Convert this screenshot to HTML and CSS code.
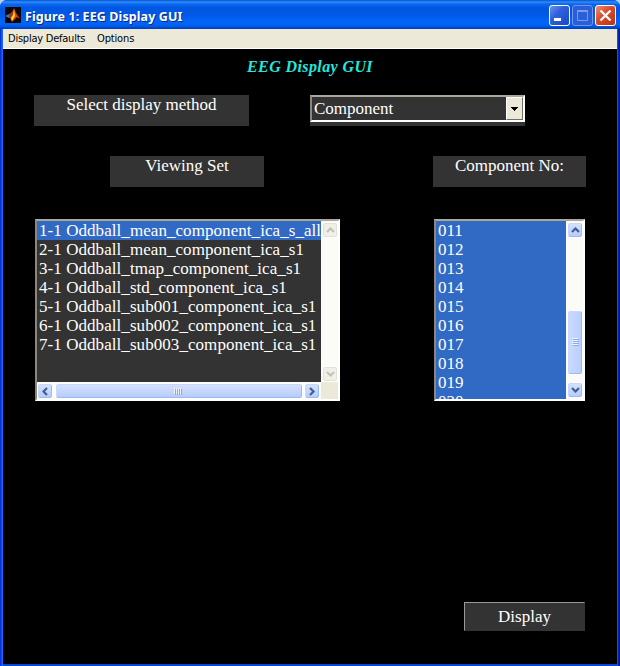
FILE: index.html
```html
<!DOCTYPE html>
<html lang="en">
<head>
<meta charset="utf-8">
<title>Figure 1: EEG Display GUI</title>
<link rel="stylesheet" href="styles.css">
</head>
<body>
<div class="window">
  <header class="titlebar">
    <svg class="logo" width="16" height="16" viewBox="0 0 16 16"><rect width="16" height="16" fill="#080808"/><path d="M0 9l4-2 2 2-2 2z" fill="#377fa3"/><path d="M4 7l3-2 2-4-2 9-3 1z" fill="#983918"/><path d="M9 1l2 5 4 6-3-2-2 2-3 3-2-4 2-2z" fill="#e63b12"/><path d="M9 2l1 7-3 5-1-3 2-3z" fill="#ffd72e"/></svg>
    <h1 class="caption">Figure 1: EEG Display GUI</h1>
    <div class="controls">
      <svg class="control" viewBox="0 0 21 21"><rect x=".5" y=".5" width="20" height="20" rx="2.5" fill="url(#blue)" stroke="#fff"/><rect x="5" y="13" width="7" height="3" fill="#fff"/>
        <defs><linearGradient id="blue" x2="1" y2="1"><stop stop-color="#7295ec"/><stop offset=".4" stop-color="#2f61dc"/><stop offset="1" stop-color="#1747c4"/></linearGradient><linearGradient id="red" x2="1" y2="1"><stop stop-color="#ee9377"/><stop offset=".45" stop-color="#db4927"/><stop offset="1" stop-color="#b93313"/></linearGradient></defs></svg>
      <svg class="control" viewBox="0 0 21 21"><rect x=".5" y=".5" width="20" height="20" rx="2.5" fill="#2860dc" stroke="#7893e4"/><path d="M5.5 5.5h10v10h-10zM5 6.5h11" fill="none" stroke="#8398df"/></svg>
      <svg class="control" viewBox="0 0 21 21"><rect x=".5" y=".5" width="20" height="20" rx="2.5" fill="url(#red)" stroke="#fff"/><path d="M5.5 5.5l10 10M15.500 5.500l-10 10" stroke="#fff" stroke-width="2.4"/></svg>
    </div>
  </header>
  <nav class="menubar"><span class="menu-defaults">Display Defaults</span><span class="menu-options">Options</span></nav>
  <main class="figure">
    <h2 class="heading">EEG Display GUI</h2>
    <div class="row method-row">
      <div class="label method-label">Select display method</div>
      <div class="combo-wrap"><div class="combo"><span class="combo-value">Component</span><span class="combo-button"><svg width="7" height="4" viewBox="0 0 7 4" shape-rendering="crispEdges"><path d="M0 0h7v1H6v1H5v1H4v1H3V3H2V2H1V1H0z"/></svg></span></div></div>
    </div>
    <div class="row label-row">
      <div class="label">Viewing Set</div>
      <div class="label component-label">Component No:</div>
    </div>
    <div class="row list-row">
      <div class="listbox sets">
        <ul class="items">
          <li class="selected">1-1 Oddball_mean_component_ica_s_all</li>
          <li>2-1 Oddball_mean_component_ica_s1</li>
          <li>3-1 Oddball_tmap_component_ica_s1</li>
          <li>4-1 Oddball_std_component_ica_s1</li>
          <li>5-1 Oddball_sub001_component_ica_s1</li>
          <li>6-1 Oddball_sub002_component_ica_s1</li>
          <li>7-1 Oddball_sub003_component_ica_s1</li>
        </ul>
        <div class="scroll vertical disabled">
          <span class="arrow"><svg width="9" height="6" viewBox="0 0 9 6"><path d="M1 5l3.500-3.500L8 5"/></svg></span>
          <span class="arrow"><svg width="9" height="6" viewBox="0 0 9 6"><path d="M1 1l3.500 3.500L8 1"/></svg></span>
        </div>
        <div class="scroll horizontal">
          <span class="arrow"><svg width="6" height="9" viewBox="0 0 6 9"><path d="M5 1L1.500 4.500 5 8"/></svg></span>
          <span class="thumb"><svg width="9" height="7" viewBox="0 0 9 7"><path class="grip-light" d="M.5 0v6M2.500 0v6M4.500 0v6M6.500 0v6"/><path class="grip-dark" d="M1.500 1v6M3.500 1v6M5.500 1v6M7.500 1v6"/></svg></span>
          <span class="arrow"><svg width="6" height="9" viewBox="0 0 6 9"><path d="M1 1l3.500 3.500L1 8"/></svg></span>
        </div>
        <div class="corner"></div>
      </div>
      <div class="listbox components">
        <ul class="items">
          <li>011</li><li>012</li><li>013</li><li>014</li><li>015</li><li>016</li><li>017</li><li>018</li><li>019</li><li>020</li>
        </ul>
        <div class="scroll vertical">
          <span class="arrow"><svg width="9" height="6" viewBox="0 0 9 6"><path d="M1 5l3.500-3.500L8 5"/></svg></span>
          <span class="thumb"><svg width="7" height="9" viewBox="0 0 7 9"><path class="grip-light" d="M0 .5h6M0 2.500h6M0 4.500h6M0 6.500h6"/><path class="grip-dark" d="M1 1.500h6M1 3.500h6M1 5.500h6M1 7.500h6"/></svg></span>
          <span class="arrow"><svg width="9" height="6" viewBox="0 0 9 6"><path d="M1 1l3.500 3.500L8 1"/></svg></span>
        </div>
      </div>
    </div>
    <button class="display-button">Display</button>
  </main>
</div>
</body>
</html>
```
FILE: styles.css
```css
* { box-sizing: border-box; }
body { margin: 0; width: 620px; height: 666px; overflow: hidden; background: #b9cdf0; }
.window {
  width: 620px; height: 666px; overflow: hidden;
  display: flex; flex-direction: column;
  border-radius: 7px 7px 0 0;
  background: linear-gradient(90deg, #0831d9 0 1px, #0855e8 1px 2px, #1668f4 2px 3px, #0846d8 3px 617px, #1450e0 617px 618px, #0025b0 618px 619px, #001590 619px);
}
.titlebar {
  height: 29px; flex: none; display: flex; align-items: flex-start; padding: 7px 5px 0;
  background: linear-gradient(#0a50c8 0, #2b8cff 2px, #0b68f2 4px, #0057e0 8px, #0058e5 14px, #0065fa 22px, #0062f5 25px, #0048ca 28px, #003bb5 29px);
}
.logo { flex: none; }
.caption {
  margin: 1px 0 0 4px; flex: 1; white-space: nowrap;
  font: bold 12.5px/17px "Noto Sans", "Open Sans", sans-serif; letter-spacing: 0.1px;
  color: #fff; text-shadow: 1px 1px #0a2a80;
}
.controls { display: flex; gap: 2px; margin: -2px -1px 0 0; }
.control { width: 21px; height: 21px; }
.menubar {
  height: 20px; flex: none; margin: 0 3px; padding-left: 5px;
  display: flex; gap: 12px; background: #ece9d8; border-bottom: 1px solid #fff;
  font: 11px/19px "DejaVu Sans Condensed", "DejaVu Sans", sans-serif; color: #000;
}
.menu-defaults { width: 77px; white-space: nowrap; letter-spacing: -0.23px; }
.menu-options { letter-spacing: -0.15px; }
.figure {
  height: 615px; margin: 0 3px 2px; background: #000; color: #fff;
  display: flex; flex-direction: column; overflow: hidden;
  font: 17px/19px "Liberation Serif", serif;
}
.heading {
  margin: 8px 0 0; height: 38px; text-align: center;
  font: italic bold 16px/20px "Liberation Serif", serif; letter-spacing: .4px; color: #22e8df;
}
.row { display: flex; flex: none; }
.method-row { height: 61px; margin-left: 31px; gap: 61px; }
.label { height: 31px; background: #333; text-align: center; }
.method-label { width: 215px; }
.combo-wrap { width: 215px; height: 31px; background: #333; }
.combo {
  height: 27px; display: flex; justify-content: space-between;
  border: 2px solid; border-color: #aca899 #fff #fff #8c8778; padding-left: 2px;
}
.combo-value { line-height: 24px; }
.combo-button {
  width: 17px; display: flex; align-items: center; justify-content: center;
  background: #ece9d8; border: 1px solid; border-color: #fff #716f64 #716f64 #fff;
}
.label-row { height: 63px; margin: 0 31px 0 107px; justify-content: space-between; }
.label-row .label { width: 154px; }
.label-row .component-label { width: 153px; }
.list-row { height: 182px; margin: 0 32px; justify-content: space-between; }
.listbox {
  display: grid; height: 182px; border: 2px solid;
  border-color: #aca899 #fff #fff #8c8778; background: #333;
}
.sets { width: 305px; grid-template: 161px 17px / 284px 17px; letter-spacing: .06px; }
.components { width: 151px; grid-template: 178px / 130px 17px; }
.items { margin: 0; padding: 0; list-style: none; overflow: hidden; white-space: nowrap; }
.items li { height: 19px; padding-left: 2px; }
.selected, .components .items { background: #316ac5; }
.scroll { display: flex; background: #fbfbf7; justify-content: space-between; }
.vertical { flex-direction: column; padding: 1px 0 0 1px; }
.components .vertical { padding-bottom: 1px; }
.horizontal { padding: 1px 1px 0 0; }
.arrow, .thumb {
  display: flex; align-items: center; justify-content: center; flex: none;
  border: 1px solid #fff; border-radius: 3px;
  background: linear-gradient(#d6e2ff, #b5cbfa);
  box-shadow: inset -1px -1px #9db9ef, inset 1px 1px #c8d8fa;
}
.arrow { width: 16px; height: 16px; }
.arrow path { fill: none; stroke: #435f91; stroke-width: 2.2; }
.disabled .arrow { background: #f1f0e8; box-shadow: inset 0 0 0 1px #e3e1d6; }
.disabled .arrow path { stroke: #c4c3b8; }
.horizontal .thumb { width: 248px; height: 16px; }
.components .thumb { width: 16px; height: 65px; margin-top: 65px; background: linear-gradient(90deg, #cbdbff, #bacdfc); }
.grip-light { stroke: #eef4ff; }
.grip-dark { stroke: #8ba9e4; }
.corner { background: #ece9d8; }
.display-button {
  width: 121px; height: 29px; margin: 201px 32px 0 auto; padding: 0; flex: none;
  border: 1px solid; border-color: #999 #333 #333 #999; border-radius: 0;
  background: #333; color: #fff; font: 17px/26px "Liberation Serif", serif;
}
```
